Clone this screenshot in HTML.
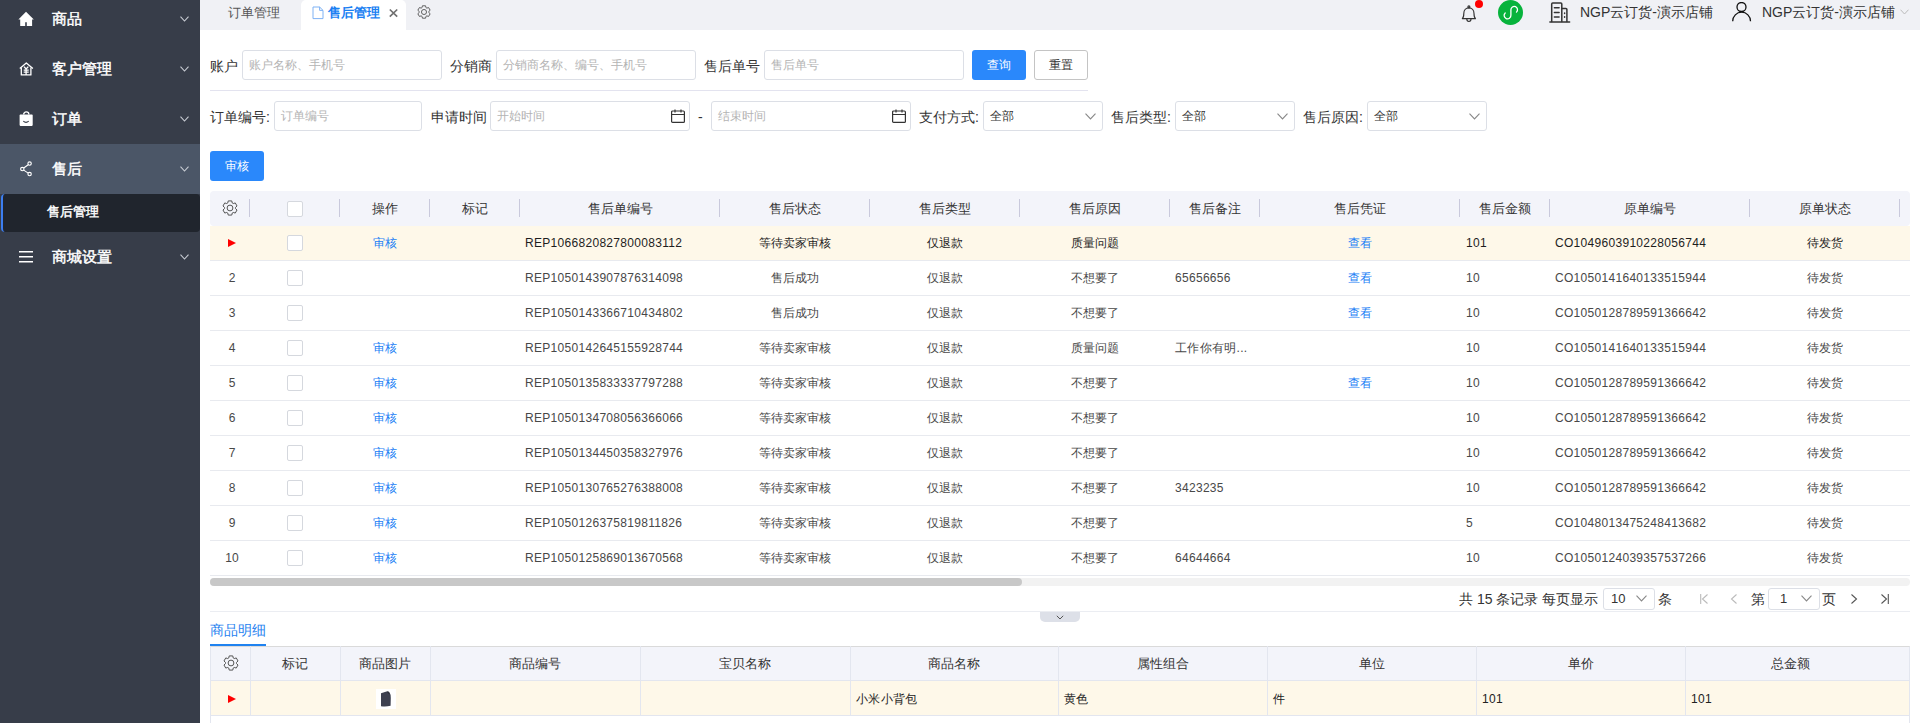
<!DOCTYPE html>
<html><head><meta charset="utf-8"><style>
*{box-sizing:border-box;margin:0;padding:0}
html,body{width:1920px;height:723px;overflow:hidden;background:#fff;font-family:"Liberation Sans",sans-serif;color:#333}
.a{position:absolute}
.mt{position:absolute;left:52px;color:#fff;font-size:15px;line-height:20px;height:20px;-webkit-text-stroke:0.45px #fff}
.tab{position:absolute;top:0;height:30px;line-height:26px;font-size:13px}
.lbl{position:absolute;font-size:14px;line-height:32px;height:30px;color:#333}
.inp{position:absolute;height:30px;border:1px solid #dcdfe6;border-radius:3px;background:#fff;font-size:12px;line-height:28px;padding-left:6px;color:#b4b4b4}
.sel{color:#333}
.btn{position:absolute;height:30px;width:54px;border-radius:3px;font-size:12px;line-height:31px;text-align:center}
.th{position:absolute;top:191px;height:35px;line-height:35px;font-size:13px;text-align:center;color:#333}
.sep{position:absolute;top:199px;width:1px;height:18px;background:#c9c9dc}
.row{position:absolute;left:210px;width:1700px;height:35px;border-bottom:1px solid #e8eaef;color:#484848}
.r1{color:#1e1e1e}
.c{position:absolute;top:0;height:34px;line-height:34px;font-size:12px;white-space:nowrap}
.cc{text-align:center}
.lnk{color:#1b80f5}
.cb{position:absolute;left:77px;top:9px;width:16px;height:16px;border:1px solid #d5d8de;border-radius:2px;background:#fff}
.num{letter-spacing:0.3px}
.tri{position:absolute;width:0;height:0;border-top:4px solid transparent;border-bottom:4px solid transparent;border-left:8px solid #f00}
.pg{position:absolute;top:588px;height:22px;line-height:22px;font-size:14px;color:#333;white-space:nowrap}
.ps{position:absolute;top:588px;width:52px;height:22px;border:1px solid #dcdfe6;border-radius:3px;font-size:13px;line-height:20px;color:#333}
.dh{position:absolute;top:646px;height:35px;line-height:35px;text-align:center;font-size:13px;color:#333}
.dc{position:absolute;top:681px;height:35px;line-height:37px;font-size:12px;color:#222}
</style></head><body>
<div class="a" style="left:0;top:0;width:200px;height:723px;background:#373d49"></div>
<div class="a" style="left:0;top:144px;width:200px;height:50px;background:#4b5667"></div>
<div class="a" style="left:1px;top:194px;width:199px;height:38px;background:#20252d;border-radius:4px;border-left:2px solid #3c7ef0"></div>
<div class="mt" style="top:9px">商品</div>
<svg class="a" style="left:180px;top:16px" width="9" height="6" viewBox="0 0 9 6"><path d="M0.5 0.7L4.5 5L8.5 0.7" stroke="#c8ccd4" stroke-width="1.1" fill="none"/></svg>
<div class="mt" style="top:59px">客户管理</div>
<svg class="a" style="left:180px;top:66px" width="9" height="6" viewBox="0 0 9 6"><path d="M0.5 0.7L4.5 5L8.5 0.7" stroke="#c8ccd4" stroke-width="1.1" fill="none"/></svg>
<div class="mt" style="top:109px">订单</div>
<svg class="a" style="left:180px;top:116px" width="9" height="6" viewBox="0 0 9 6"><path d="M0.5 0.7L4.5 5L8.5 0.7" stroke="#c8ccd4" stroke-width="1.1" fill="none"/></svg>
<div class="mt" style="top:159px">售后</div>
<svg class="a" style="left:180px;top:166px" width="9" height="6" viewBox="0 0 9 6"><path d="M0.5 0.7L4.5 5L8.5 0.7" stroke="#c8ccd4" stroke-width="1.1" fill="none"/></svg>
<div class="mt" style="top:247px">商城设置</div>
<svg class="a" style="left:180px;top:254px" width="9" height="6" viewBox="0 0 9 6"><path d="M0.5 0.7L4.5 5L8.5 0.7" stroke="#c8ccd4" stroke-width="1.1" fill="none"/></svg>
<div class="a" style="left:47px;top:202px;height:20px;line-height:20px;font-size:13px;color:#fff;-webkit-text-stroke:0.45px #fff">售后管理</div>
<svg class="a" style="left:18px;top:11px" width="16" height="16" viewBox="0 0 16 16"><path d="M8 0.8L0.4 8.6H2.2V15H7.2V11.2H8.8V15H14.1V8.6H15.8Z" fill="#fff"/></svg>
<svg class="a" style="left:18px;top:60px" width="16" height="16" viewBox="0 0 16 16"><g stroke="#fff" stroke-width="1.3" fill="none" stroke-linejoin="round"><path d="M1.8 8.6L8.3 3L14.9 8.6"/><path d="M3.3 7.5V14.9H12.9V7.5"/><path d="M6 6.6L8.1 9L10.3 6.6M5.7 10.2H10.7M5.7 12.2H10.7M8.1 9V14.9"/></g></svg>
<svg class="a" style="left:18px;top:110px" width="16" height="16" viewBox="0 0 16 16"><path d="M5.6 4.6A2.65 2.65 0 0 1 10.9 4.6" stroke="#fff" stroke-width="1.3" fill="none"/><rect x="1.6" y="4.6" width="13.1" height="11.3" rx="0.8" fill="#fff"/><path d="M5.3 11.2Q8 13.6 10.7 11.2" stroke="#373d49" stroke-width="1.1" fill="none"/></svg>
<svg class="a" style="left:18px;top:159px" width="16" height="18" viewBox="0 0 16 18"><g stroke="#fff" stroke-width="1.1" fill="none"><circle cx="11.6" cy="4.6" r="1.7"/><circle cx="4.3" cy="10.1" r="1.7"/><circle cx="11.6" cy="15.1" r="1.7"/><path d="M10.2 5.7L5.7 9M5.7 11.1L10.2 14.1"/></g></svg>
<svg class="a" style="left:19px;top:250px" width="14" height="14" viewBox="0 0 14 14"><g stroke="#fff" stroke-width="1.6"><path d="M0 1.8h14M0 6.8h14M0 11.8h14"/></g></svg>
<div class="a" style="left:200px;top:0;width:1720px;height:30px;background:#f0f1f5"></div>
<div class="tab" style="left:228px;color:#555">订单管理</div>
<div class="a" style="left:301px;top:0;width:105px;height:30px;background:#fff;border-radius:5px 5px 0 0"></div>
<svg class="a" style="left:312px;top:6px" width="12" height="14" viewBox="0 0 12 14"><path d="M1 1h6.6L11 4.4V12.6H1z M7.6 1V4.4H11" stroke="#7fb2f4" stroke-width="1" fill="none"/></svg>
<div class="tab" style="left:328px;color:#1a7ff2;font-weight:bold">售后管理</div>
<svg class="a" style="left:388px;top:8px" width="11" height="10" viewBox="0 0 11 10"><path d="M1.8 1.5L9.2 8.6M9.2 1.5L1.8 8.6" stroke="#707070" stroke-width="1.7"/></svg>
<svg class="a" style="left:417px;top:4.5px" width="14" height="14" viewBox="4 4 16 16"><path fill="none" stroke="#555" stroke-width="1.05" stroke-linejoin="round" d="M14.24 6.98 L13.77 4.92 L10.23 4.92 L9.76 6.98 L8.77 7.55 L6.75 6.93 L4.98 9.99 L6.53 11.43 L6.53 12.57 L4.98 14.01 L6.75 17.07 L8.77 16.45 L9.76 17.02 L10.23 19.08 L13.77 19.08 L14.24 17.02 L15.23 16.45 L17.25 17.07 L19.02 14.01 L17.47 12.57 L17.47 11.43 L19.02 9.99 L17.25 6.93 L15.23 7.55Z"/><circle cx="12" cy="12" r="2.9" fill="none" stroke="#555" stroke-width="1.05"/></svg>
<svg class="a" style="left:1461px;top:5px" width="16" height="18" viewBox="0 0 16 18"><g stroke="#333" stroke-width="1.15" fill="none" stroke-linejoin="round"><circle cx="7.9" cy="1.9" r="1"/><path d="M1.3 13.6C2.6 12.6 2.8 11 2.8 8.5C2.8 5.2 5 2.9 7.9 2.9C10.8 2.9 13 5.2 13 8.5C13 11 13.2 12.6 14.5 13.6Z"/><path d="M5.8 14.1A2.1 2.4 0 0 0 10 14.1"/></g></svg>
<div class="a" style="left:1474.8px;top:-0.3px;width:8.4px;height:8.4px;border-radius:50%;background:#f00"></div>
<div class="a" style="left:1497.8px;top:-0.2px;width:25.4px;height:25.4px;border-radius:50%;background:#07b33c"></div>
<svg class="a" style="left:1498px;top:0px" width="25" height="25" viewBox="0 0 25 25"><path d="M7.2 12.9A3.4 3.4 0 1 0 12.9 15.3L12.9 9.7A3.3 3.3 0 1 1 18.5 12.1" stroke="#fff" stroke-width="1.3" fill="none" stroke-linecap="round"/></svg>
<svg class="a" style="left:1549px;top:0px" width="22" height="24" viewBox="0 0 22 24"><g stroke="#333" stroke-width="1.5" fill="none" stroke-linecap="round" stroke-linejoin="round"><path d="M0.9 21.9H20.6"/><path d="M2.7 21.6V3.9Q2.7 2.9 3.7 2.9H11.8Q12.8 2.9 12.8 3.9V21.6"/><path d="M12.8 8.6H16.9Q17.9 8.6 17.9 9.6V21.6"/><path d="M5.4 7.7H10.1M5.4 12.4H10.1M5.4 17H10.1"/><path d="M15.6 13v0.4M15.6 16.8v0.4"/></g></svg>
<div class="a" style="left:1580px;top:2px;height:20px;line-height:20px;font-size:14px;color:#333">NGP云订货-演示店铺</div>
<svg class="a" style="left:1732px;top:2px" width="20" height="21" viewBox="0 0 20 21"><g stroke="#111" stroke-width="1.3" fill="none"><circle cx="9.5" cy="5" r="4.5"/><path d="M0.7 19.2A8.9 9 0 0 1 18.5 19.2"/></g></svg>
<div class="a" style="left:1762px;top:2px;height:20px;line-height:20px;font-size:14px;color:#333">NGP云订货-演示店铺</div>
<svg class="a" style="left:1900px;top:9px" width="9" height="6" viewBox="0 0 9 6"><path d="M0.5 0.7L4.5 5L8.5 0.7" stroke="#bbb" stroke-width="1.0" fill="none"/></svg>
<div class="lbl" style="left:210px;top:50px">账户</div>
<div class="inp" style="left:242px;top:50px;width:200px">账户名称、手机号</div>
<div class="lbl" style="left:450px;top:50px">分销商</div>
<div class="inp" style="left:496px;top:50px;width:200px">分销商名称、编号、手机号</div>
<div class="lbl" style="left:704px;top:50px">售后单号</div>
<div class="inp" style="left:764px;top:50px;width:200px">售后单号</div>
<div class="btn" style="left:972px;top:50px;background:#2a88fb;color:#fff">查询</div>
<div class="btn" style="left:1034px;top:50px;border:1px solid #c4c4c4;background:#fff;color:#333;line-height:29px">重置</div>
<div class="a" style="left:210px;top:90px;width:878px;height:1px;background:#e3e3ef"></div>
<div class="lbl" style="left:210px;top:101px">订单编号:</div>
<div class="inp" style="left:274px;top:101px;width:148px">订单编号</div>
<div class="lbl" style="left:431px;top:101px">申请时间</div>
<div class="inp" style="left:490px;top:101px;width:200px">开始时间</div>
<svg class="a" style="left:671px;top:109px" width="14" height="14" viewBox="0 0 14 14"><g stroke="#333" stroke-width="1.2" fill="none"><rect x="0.6" y="2" width="12.8" height="11.4" rx="1"/><path d="M0.6 5.5h12.8M4 0.5v3M10 0.5v3"/></g></svg>
<div class="lbl" style="left:698px;top:101px">-</div>
<div class="inp" style="left:711px;top:101px;width:200px">结束时间</div>
<svg class="a" style="left:892px;top:109px" width="14" height="14" viewBox="0 0 14 14"><g stroke="#333" stroke-width="1.2" fill="none"><rect x="0.6" y="2" width="12.8" height="11.4" rx="1"/><path d="M0.6 5.5h12.8M4 0.5v3M10 0.5v3"/></g></svg>
<div class="lbl" style="left:919px;top:101px">支付方式:</div>
<div class="inp sel" style="left:983px;top:101px;width:120px">全部</div>
<svg class="a" style="left:1085px;top:113px" width="11" height="7" viewBox="0 0 11 7"><path d="M0.5 0.7L5.5 6L10.5 0.7" stroke="#888" stroke-width="1.1" fill="none"/></svg>
<div class="lbl" style="left:1111px;top:101px">售后类型:</div>
<div class="inp sel" style="left:1175px;top:101px;width:120px">全部</div>
<svg class="a" style="left:1277px;top:113px" width="11" height="7" viewBox="0 0 11 7"><path d="M0.5 0.7L5.5 6L10.5 0.7" stroke="#888" stroke-width="1.1" fill="none"/></svg>
<div class="lbl" style="left:1303px;top:101px">售后原因:</div>
<div class="inp sel" style="left:1367px;top:101px;width:120px">全部</div>
<svg class="a" style="left:1469px;top:113px" width="11" height="7" viewBox="0 0 11 7"><path d="M0.5 0.7L5.5 6L10.5 0.7" stroke="#888" stroke-width="1.1" fill="none"/></svg>
<div class="btn" style="left:210px;top:151px;background:#2a88fb;color:#fff">审核</div>
<div class="a" style="left:210px;top:191px;width:1700px;height:35px;background:#f3f4fa;border-radius:4px"></div>
<svg class="a" style="left:222px;top:200px" width="16" height="16" viewBox="4 4 16 16"><path fill="none" stroke="#555" stroke-width="1.0" stroke-linejoin="round" d="M14.24 6.98 L13.77 4.92 L10.23 4.92 L9.76 6.98 L8.77 7.55 L6.75 6.93 L4.98 9.99 L6.53 11.43 L6.53 12.57 L4.98 14.01 L6.75 17.07 L8.77 16.45 L9.76 17.02 L10.23 19.08 L13.77 19.08 L14.24 17.02 L15.23 16.45 L17.25 17.07 L19.02 14.01 L17.47 12.57 L17.47 11.43 L19.02 9.99 L17.25 6.93 L15.23 7.55Z"/><circle cx="12" cy="12" r="2.9" fill="none" stroke="#555" stroke-width="1.0"/></svg>
<div class="a" style="left:287px;top:201px;width:16px;height:16px;border:1px solid #d5d8de;border-radius:2px;background:#fff"></div>
<div class="sep" style="left:249px"></div>
<div class="sep" style="left:339px"></div>
<div class="th" style="left:340px;width:90px">操作</div>
<div class="sep" style="left:429px"></div>
<div class="th" style="left:430px;width:90px">标记</div>
<div class="sep" style="left:519px"></div>
<div class="th" style="left:520px;width:200px">售后单编号</div>
<div class="sep" style="left:719px"></div>
<div class="th" style="left:720px;width:150px">售后状态</div>
<div class="sep" style="left:869px"></div>
<div class="th" style="left:870px;width:150px">售后类型</div>
<div class="sep" style="left:1019px"></div>
<div class="th" style="left:1020px;width:150px">售后原因</div>
<div class="sep" style="left:1169px"></div>
<div class="th" style="left:1170px;width:90px">售后备注</div>
<div class="sep" style="left:1259px"></div>
<div class="th" style="left:1260px;width:200px">售后凭证</div>
<div class="sep" style="left:1459px"></div>
<div class="th" style="left:1460px;width:90px">售后金额</div>
<div class="sep" style="left:1549px"></div>
<div class="th" style="left:1550px;width:200px">原单编号</div>
<div class="sep" style="left:1749px"></div>
<div class="th" style="left:1750px;width:150px">原单状态</div>
<div class="sep" style="left:1899px"></div>
<div class="row r1" style="top:226px;background:#fef8e9;">
<div class="tri" style="left:18px;top:13px"></div>
<div class="cb"></div>
<div class="c cc lnk" style="left:130px;width:90px">审核</div>
<div class="c num" style="left:315px">REP1066820827800083112</div>
<div class="c cc" style="left:510px;width:150px">等待卖家审核</div>
<div class="c cc" style="left:660px;width:150px">仅退款</div>
<div class="c cc" style="left:810px;width:150px">质量问题</div>
<div class="c cc lnk" style="left:1050px;width:200px">查看</div>
<div class="c num" style="left:1256px">101</div>
<div class="c num" style="left:1345px">CO1049603910228056744</div>
<div class="c cc" style="left:1540px;width:150px">待发货</div>
</div>
<div class="row" style="top:261px;">
<div class="c cc" style="left:0;width:44px">2</div>
<div class="cb"></div>
<div class="c num" style="left:315px">REP1050143907876314098</div>
<div class="c cc" style="left:510px;width:150px">售后成功</div>
<div class="c cc" style="left:660px;width:150px">仅退款</div>
<div class="c cc" style="left:810px;width:150px">不想要了</div>
<div class="c num" style="left:965px">65656656</div>
<div class="c cc lnk" style="left:1050px;width:200px">查看</div>
<div class="c num" style="left:1256px">10</div>
<div class="c num" style="left:1345px">CO1050141640133515944</div>
<div class="c cc" style="left:1540px;width:150px">待发货</div>
</div>
<div class="row" style="top:296px;">
<div class="c cc" style="left:0;width:44px">3</div>
<div class="cb"></div>
<div class="c num" style="left:315px">REP1050143366710434802</div>
<div class="c cc" style="left:510px;width:150px">售后成功</div>
<div class="c cc" style="left:660px;width:150px">仅退款</div>
<div class="c cc" style="left:810px;width:150px">不想要了</div>
<div class="c cc lnk" style="left:1050px;width:200px">查看</div>
<div class="c num" style="left:1256px">10</div>
<div class="c num" style="left:1345px">CO1050128789591366642</div>
<div class="c cc" style="left:1540px;width:150px">待发货</div>
</div>
<div class="row" style="top:331px;">
<div class="c cc" style="left:0;width:44px">4</div>
<div class="cb"></div>
<div class="c cc lnk" style="left:130px;width:90px">审核</div>
<div class="c num" style="left:315px">REP1050142645155928744</div>
<div class="c cc" style="left:510px;width:150px">等待卖家审核</div>
<div class="c cc" style="left:660px;width:150px">仅退款</div>
<div class="c cc" style="left:810px;width:150px">质量问题</div>
<div class="c num" style="left:965px">工作你有明...</div>
<div class="c num" style="left:1256px">10</div>
<div class="c num" style="left:1345px">CO1050141640133515944</div>
<div class="c cc" style="left:1540px;width:150px">待发货</div>
</div>
<div class="row" style="top:366px;">
<div class="c cc" style="left:0;width:44px">5</div>
<div class="cb"></div>
<div class="c cc lnk" style="left:130px;width:90px">审核</div>
<div class="c num" style="left:315px">REP1050135833337797288</div>
<div class="c cc" style="left:510px;width:150px">等待卖家审核</div>
<div class="c cc" style="left:660px;width:150px">仅退款</div>
<div class="c cc" style="left:810px;width:150px">不想要了</div>
<div class="c cc lnk" style="left:1050px;width:200px">查看</div>
<div class="c num" style="left:1256px">10</div>
<div class="c num" style="left:1345px">CO1050128789591366642</div>
<div class="c cc" style="left:1540px;width:150px">待发货</div>
</div>
<div class="row" style="top:401px;">
<div class="c cc" style="left:0;width:44px">6</div>
<div class="cb"></div>
<div class="c cc lnk" style="left:130px;width:90px">审核</div>
<div class="c num" style="left:315px">REP1050134708056366066</div>
<div class="c cc" style="left:510px;width:150px">等待卖家审核</div>
<div class="c cc" style="left:660px;width:150px">仅退款</div>
<div class="c cc" style="left:810px;width:150px">不想要了</div>
<div class="c num" style="left:1256px">10</div>
<div class="c num" style="left:1345px">CO1050128789591366642</div>
<div class="c cc" style="left:1540px;width:150px">待发货</div>
</div>
<div class="row" style="top:436px;">
<div class="c cc" style="left:0;width:44px">7</div>
<div class="cb"></div>
<div class="c cc lnk" style="left:130px;width:90px">审核</div>
<div class="c num" style="left:315px">REP1050134450358327976</div>
<div class="c cc" style="left:510px;width:150px">等待卖家审核</div>
<div class="c cc" style="left:660px;width:150px">仅退款</div>
<div class="c cc" style="left:810px;width:150px">不想要了</div>
<div class="c num" style="left:1256px">10</div>
<div class="c num" style="left:1345px">CO1050128789591366642</div>
<div class="c cc" style="left:1540px;width:150px">待发货</div>
</div>
<div class="row" style="top:471px;">
<div class="c cc" style="left:0;width:44px">8</div>
<div class="cb"></div>
<div class="c cc lnk" style="left:130px;width:90px">审核</div>
<div class="c num" style="left:315px">REP1050130765276388008</div>
<div class="c cc" style="left:510px;width:150px">等待卖家审核</div>
<div class="c cc" style="left:660px;width:150px">仅退款</div>
<div class="c cc" style="left:810px;width:150px">不想要了</div>
<div class="c num" style="left:965px">3423235</div>
<div class="c num" style="left:1256px">10</div>
<div class="c num" style="left:1345px">CO1050128789591366642</div>
<div class="c cc" style="left:1540px;width:150px">待发货</div>
</div>
<div class="row" style="top:506px;">
<div class="c cc" style="left:0;width:44px">9</div>
<div class="cb"></div>
<div class="c cc lnk" style="left:130px;width:90px">审核</div>
<div class="c num" style="left:315px">REP1050126375819811826</div>
<div class="c cc" style="left:510px;width:150px">等待卖家审核</div>
<div class="c cc" style="left:660px;width:150px">仅退款</div>
<div class="c cc" style="left:810px;width:150px">不想要了</div>
<div class="c num" style="left:1256px">5</div>
<div class="c num" style="left:1345px">CO1048013475248413682</div>
<div class="c cc" style="left:1540px;width:150px">待发货</div>
</div>
<div class="row" style="top:541px;">
<div class="c cc" style="left:0;width:44px">10</div>
<div class="cb"></div>
<div class="c cc lnk" style="left:130px;width:90px">审核</div>
<div class="c num" style="left:315px">REP1050125869013670568</div>
<div class="c cc" style="left:510px;width:150px">等待卖家审核</div>
<div class="c cc" style="left:660px;width:150px">仅退款</div>
<div class="c cc" style="left:810px;width:150px">不想要了</div>
<div class="c num" style="left:965px">64644664</div>
<div class="c num" style="left:1256px">10</div>
<div class="c num" style="left:1345px">CO1050124039357537266</div>
<div class="c cc" style="left:1540px;width:150px">待发货</div>
</div>
<div class="a" style="left:210px;top:578px;width:1700px;height:8px;background:#f2f2f2;border-radius:4px"></div>
<div class="a" style="left:210px;top:578px;width:812px;height:8px;background:#c8c8c8;border-radius:4px"></div>
<div class="pg" style="left:1459px">共 15 条记录 每页显示</div>
<div class="ps" style="left:1603px;padding-left:7px">10</div>
<svg class="a" style="left:1636px;top:595px" width="11" height="7" viewBox="0 0 11 7"><path d="M0.5 0.7L5.5 6L10.5 0.7" stroke="#888" stroke-width="1.1" fill="none"/></svg>
<div class="pg" style="left:1658px">条</div>
<svg class="a" style="left:1700px;top:594px" width="8" height="10" viewBox="0 0 8 10"><path d="M0.7 0v10M7.5 0.5L2.5 5L7.5 9.5" stroke="#bbb" stroke-width="1.1" fill="none"/></svg>
<svg class="a" style="left:1730px;top:594px" width="7" height="10" viewBox="0 0 7 10"><path d="M6.5 0.5L1.5 5L6.5 9.5" stroke="#bbb" stroke-width="1.1" fill="none"/></svg>
<div class="pg" style="left:1751px">第</div>
<div class="ps" style="left:1768px;padding-left:11px">1</div>
<svg class="a" style="left:1801px;top:595px" width="11" height="7" viewBox="0 0 11 7"><path d="M0.5 0.7L5.5 6L10.5 0.7" stroke="#888" stroke-width="1.1" fill="none"/></svg>
<div class="pg" style="left:1822px">页</div>
<svg class="a" style="left:1851px;top:594px" width="7" height="10" viewBox="0 0 7 10"><path d="M0.5 0.5L5.5 5L0.5 9.5" stroke="#555" stroke-width="1.1" fill="none"/></svg>
<svg class="a" style="left:1881px;top:594px" width="8" height="10" viewBox="0 0 8 10"><path d="M0.5 0.5L5.5 5L0.5 9.5M7.3 0v10" stroke="#555" stroke-width="1.1" fill="none"/></svg>
<div class="a" style="left:210px;top:611px;width:1700px;height:1px;background:#ebedf2"></div>
<div class="a" style="left:1040px;top:612px;width:40px;height:10px;background:#dde0e8;border-radius:0 0 5px 5px"></div>
<svg class="a" style="left:1056px;top:615px" width="8" height="5" viewBox="0 0 8 5"><path d="M0.8 0.8L4 4L7.2 0.8" stroke="#555" stroke-width="1" fill="none"/></svg>
<div class="a" style="left:210px;top:619px;height:22px;line-height:22px;font-size:14px;color:#1f82f0">商品明细</div>
<div class="a" style="left:210px;top:644px;width:56px;height:2px;background:#1f82f0"></div>
<div class="a" style="left:210px;top:646px;width:1700px;height:35px;background:#f3f4fa;border:1px solid #e3e6ef;border-top-color:#dadada"></div>
<div class="a" style="left:210px;top:681px;width:1700px;height:50px;border:1px solid #e3e6ef;border-top:none"></div>
<div class="a" style="left:211px;top:681px;width:1698px;height:35px;background:#fef8e9;border-bottom:1px solid #e3e6ef"></div>
<svg class="a" style="left:223px;top:655px" width="16" height="16" viewBox="4 4 16 16"><path fill="none" stroke="#555" stroke-width="1.0" stroke-linejoin="round" d="M14.24 6.98 L13.77 4.92 L10.23 4.92 L9.76 6.98 L8.77 7.55 L6.75 6.93 L4.98 9.99 L6.53 11.43 L6.53 12.57 L4.98 14.01 L6.75 17.07 L8.77 16.45 L9.76 17.02 L10.23 19.08 L13.77 19.08 L14.24 17.02 L15.23 16.45 L17.25 17.07 L19.02 14.01 L17.47 12.57 L17.47 11.43 L19.02 9.99 L17.25 6.93 L15.23 7.55Z"/><circle cx="12" cy="12" r="2.9" fill="none" stroke="#555" stroke-width="1.0"/></svg>
<div class="a" style="left:250px;top:646px;width:1px;height:70px;background:#e3e6ef"></div>
<div class="a" style="left:340px;top:646px;width:1px;height:70px;background:#e3e6ef"></div>
<div class="a" style="left:430px;top:646px;width:1px;height:70px;background:#e3e6ef"></div>
<div class="a" style="left:640px;top:646px;width:1px;height:70px;background:#e3e6ef"></div>
<div class="a" style="left:850px;top:646px;width:1px;height:70px;background:#e3e6ef"></div>
<div class="a" style="left:1058px;top:646px;width:1px;height:70px;background:#e3e6ef"></div>
<div class="a" style="left:1267px;top:646px;width:1px;height:70px;background:#e3e6ef"></div>
<div class="a" style="left:1476px;top:646px;width:1px;height:70px;background:#e3e6ef"></div>
<div class="a" style="left:1685px;top:646px;width:1px;height:70px;background:#e3e6ef"></div>
<div class="dh" style="left:250px;width:90px">标记</div>
<div class="dh" style="left:340px;width:90px">商品图片</div>
<div class="dh" style="left:430px;width:210px">商品编号</div>
<div class="dh" style="left:640px;width:210px">宝贝名称</div>
<div class="dh" style="left:850px;width:208px">商品名称</div>
<div class="dh" style="left:1058px;width:209px">属性组合</div>
<div class="dh" style="left:1267px;width:209px">单位</div>
<div class="dh" style="left:1476px;width:209px">单价</div>
<div class="dh" style="left:1685px;width:210px">总金额</div>
<div class="tri" style="left:228px;top:695px"></div>
<div class="a" style="left:376px;top:689px;width:20px;height:20px;background:#fff"></div>
<svg class="a" style="left:376px;top:689px" width="20" height="20" viewBox="0 0 20 20"><path d="M5 4.3L10.5 2.4Q12.6 2 13.6 3.4Q14.8 5 14.8 9L14.6 16.8Q10 18.1 5 17.3Z" fill="#3d404f"/><path d="M11.5 3.2L13.3 4.6" stroke="#22242c" stroke-width="1"/></svg>
<div class="dc num" style="left:856px">小米小背包</div>
<div class="dc num" style="left:1064px">黄色</div>
<div class="dc num" style="left:1273px">件</div>
<div class="dc num" style="left:1482px">101</div>
<div class="dc num" style="left:1691px">101</div>
</body></html>
